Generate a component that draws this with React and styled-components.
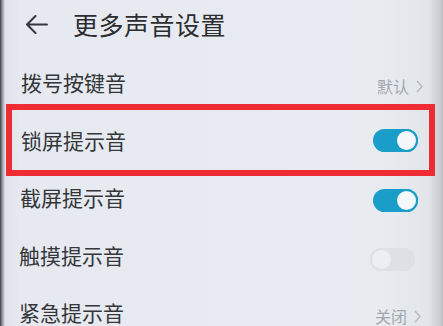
import styled, { createGlobalStyle } from "styled-components";

const GlobalStyle = createGlobalStyle`
  html, body {
    margin: 0;
    padding: 0;
    background: #e6eaef;
  }
  body {
    font-family: "Noto Sans CJK SC", "Noto Sans", sans-serif;
  }
`;

const Screen = styled.div`
  width: 443px;
  height: 326px;
  overflow: hidden;
  background: linear-gradient(
    to right,
    #3a3c40 0px,
    #8a8e94 2px,
    #dfe3e9 5px,
    #e6eaf0 20px,
    #e8ecf1 380px,
    #e2e6eb 428px,
    #c9cdd2 440px,
    #b8bcc1 443px
  );
  display: flex;
  flex-direction: column;
`;

const Header = styled.div`
  flex: 0 0 54px;
  box-sizing: border-box;
  padding: 0 0 6px 25px;
  display: flex;
  align-items: center;
  gap: 25px;
`;

const Title = styled.h1`
  margin: 0;
  font-size: 25px;
  font-weight: 400;
  color: #2b2d30;
  letter-spacing: 0.5px;
  line-height: 1;
`;

const Row = styled.div`
  position: relative;
  flex: 0 0 57.5px;
  display: flex;
  align-items: center;
  justify-content: space-between;
  padding-left: ${(p) => p.$indent || 21}px;
  padding-right: ${(p) => p.$right || 25}px;
`;

const Highlight = styled.div`
  position: absolute;
  left: 6px;
  right: 8px;
  top: -8px;
  bottom: -7px;
  border: 6px solid #ef2b33;
  pointer-events: none;
`;

const Label = styled.span`
  font-size: 21px;
  color: #34363a;
  line-height: 1;
`;

const Value = styled.span`
  display: flex;
  align-items: center;
  gap: 7px;
  font-size: 16px;
  color: #a3a7ad;
  line-height: 1;
  margin-top: 7px;
`;

const Switch = styled.div`
  width: 45px;
  height: 23px;
  border-radius: 12px;
  box-sizing: border-box;
  background: ${(p) => (p.$on ? "#1a9ec9" : "#dde0e4")};
  position: relative;
  margin-top: ${(p) => p.$shift || 0}px;
  &::after {
    content: "";
    position: absolute;
    top: 0;
    ${(p) => (p.$on ? "right: 0;" : "left: 0;")}
    width: 23px;
    height: 23px;
    border-radius: 50%;
    box-sizing: border-box;
    background: ${(p) => (p.$on ? "#f4f8fb" : "#eceff2")};
    border: 2px solid ${(p) => (p.$on ? "#1a9ec9" : "#dde0e4")};
  }
`;

const BackArrow = () => (
  <svg width="23" height="19" viewBox="0 0 23 19" fill="none">
    <path
      d="M22 9.5H2M10.5 1L2 9.5L10.5 18"
      stroke="#34363a"
      strokeWidth="2"
      strokeLinecap="round"
      strokeLinejoin="round"
    />
  </svg>
);

const Chevron = () => (
  <svg width="7" height="13" viewBox="0 0 7 13" fill="none">
    <path d="M1 1L6 6.5L1 12" stroke="#b5b9be" strokeWidth="1.4" />
  </svg>
);

export default function App() {
  return (
    <>
      <GlobalStyle />
      <Screen>
        <Header>
          <BackArrow />
          <Title>更多声音设置</Title>
        </Header>
        <Row $right={20}>
          <Label>拨号按键音</Label>
          <Value>
            默认
            <Chevron />
          </Value>
        </Row>
        <Row>
          <Highlight />
          <Label>锁屏提示音</Label>
          <Switch $on />
        </Row>
        <Row $indent={20}>
          <Label>截屏提示音</Label>
          <Switch $on $shift={6} />
        </Row>
        <Row $indent={19} $right={28}>
          <Label>触摸提示音</Label>
          <Switch $shift={8} />
        </Row>
        <Row $indent={19} $right={22}>
          <Label>紧急提示音</Label>
          <Value>
            关闭
            <Chevron />
          </Value>
        </Row>
      </Screen>
    </>
  );
}
